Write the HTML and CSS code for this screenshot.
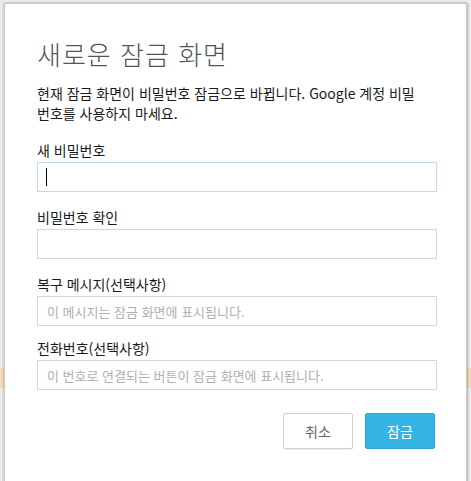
FILE: index.html
```html
<!DOCTYPE html>
<html lang="ko">
<head>
<meta charset="utf-8">
<title>새로운 잠금 화면</title>
<link rel="stylesheet" href="styles.css">
</head>
<body>
<div class="backdrop">
  <div class="dialog">
    <h1 class="title">새로운 잠금 화면</h1>
    <p class="desc">현재 잠금 화면이 비밀번호 잠금으로 바뀝니다. Google 계정 비밀<br>번호를 사용하지 마세요.</p>
    <div class="field first">
      <label class="label">새 비밀번호</label>
      <div class="input-wrap">
        <input class="input focused" type="password">
        <span class="caret"></span>
      </div>
    </div>
    <div class="field">
      <label class="label">비밀번호 확인</label>
      <input class="input" type="password">
    </div>
    <div class="field">
      <label class="label">복구 메시지(선택사항)</label>
      <input class="input" type="text" placeholder="이 메시지는 잠금 화면에 표시됩니다.">
    </div>
    <div class="field last">
      <label class="label">전화번호(선택사항)</label>
      <input class="input" type="text" placeholder="이 번호로 연결되는 버튼이 잠금 화면에 표시됩니다.">
    </div>
    <div class="actions">
      <button class="btn cancel">취소</button>
      <button class="btn primary">잠금</button>
    </div>
  </div>
</div>
</body>
</html>
```

FILE: styles.css
```css
html, body {
  margin: 0;
  padding: 0;
  height: 100%;
  overflow: hidden;
}
body {
  background:
    linear-gradient(to bottom, transparent 368px, #f3dcb8 368px, #f3dcb8 388px, transparent 388px),
    #ececec;
  font-family: "Noto Sans CJK KR", "Noto Sans", sans-serif;
}
.backdrop {
  padding: 3px 0 0 4px;
}
.dialog {
  box-sizing: border-box;
  width: 463px;
  height: 520px;
  background: #fff;
  border: 1px solid #c9c9c9;
  box-shadow: 1px 0 2px rgba(0, 0, 0, 0.25), -1px 0 2px rgba(0, 0, 0, 0.15);
  padding: 0 29px 0 32px;
}
.title {
  margin: 34px 0 0;
  font-family: "Noto Sans CJK KR Light", "Noto Sans CJK KR", sans-serif;
  font-size: 26px;
  line-height: 32px;
  font-weight: 200;
  color: #555;
  letter-spacing: 1px;
}
.desc {
  margin: 13px 0 0;
  font-size: 14px;
  line-height: 20px;
  color: #1a1a1a;
  white-space: nowrap;
}
.field {
  display: flex;
  flex-direction: column;
  margin-top: 16px;
}
.field.first {
  margin-top: 18px;
}
.field.last {
  margin-top: 13px;
}
.label {
  font-size: 14px;
  line-height: 18px;
  color: #1a1a1a;
  margin-bottom: 3px;
}
.input-wrap {
  position: relative;
  display: flex;
}
.input {
  box-sizing: border-box;
  width: 400px;
  height: 30px;
  margin: 0;
  border: 1px solid #d6d6d6;
  border-radius: 0;
  padding: 0 9px;
  font-family: "Noto Sans CJK KR", "Noto Sans", sans-serif;
  font-size: 13px;
  color: #333;
  background: #fff;
  outline: none;
}
.input::placeholder {
  color: #b0b0b0;
}
.input.focused {
  border-color: #c3dbe6;
  box-shadow: inset 0 0 1px #d8e9f0;
}
.caret {
  position: absolute;
  left: 9px;
  top: 6px;
  width: 1px;
  height: 18px;
  background: #000;
}
.actions {
  display: flex;
  justify-content: flex-end;
  gap: 12px;
  margin-top: 23px;
  padding-right: 2px;
}
.btn {
  box-sizing: border-box;
  width: 70px;
  height: 36px;
  border-radius: 2px;
  font-family: "Noto Sans CJK KR", "Noto Sans", sans-serif;
  font-size: 14px;
  padding: 0;
  cursor: pointer;
}
.btn.cancel {
  background: #fff;
  border: 1px solid #cfcfcf;
  color: #666;
  box-shadow: 0 1px 1px rgba(0, 0, 0, 0.08);
}
.btn.primary {
  background: #35b5e5;
  border: 1px solid #2ba3d3;
  color: #fff;
}
```
